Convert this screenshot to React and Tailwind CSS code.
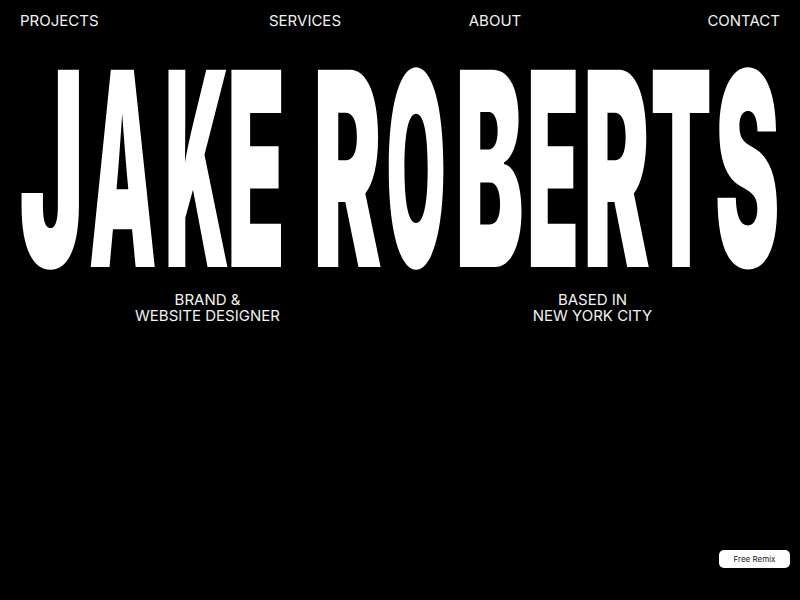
import React from "react";

const letters = [
  { c: "J", cls: "w-[60px] ml-[22px]", s: "scale-x-[0.4]" },
  { c: "A", cls: "w-[69px] ml-[6px]", s: "scale-x-[0.315]" },
  { c: "K", cls: "w-[67px] ml-[6px]", s: "scale-x-[0.315]" },
  { c: "E", cls: "w-[47px] ml-[3px]", s: "scale-x-[0.35]" },
  { c: "R", cls: "w-[68px] ml-[34px]", s: "scale-x-[0.38]" },
  { c: "O", cls: "w-[58px] ml-[5px]", s: "scale-x-[0.285]" },
  { c: "B", cls: "w-[64px] ml-[13px]", s: "scale-x-[0.38]" },
  { c: "E", cls: "w-[43px] ml-[10px]", s: "scale-x-[0.315]" },
  { c: "R", cls: "w-[63px] ml-[10px]", s: "scale-x-[0.37]" },
  { c: "T", cls: "w-[58px] ml-[4px]", s: "scale-x-[0.33]" },
  { c: "S", cls: "w-[60px] ml-[7px]", s: "scale-x-[0.36]" },
];

export default function App() {
  return (
    <div
      className="relative w-[800px] h-[600px] bg-black overflow-hidden text-white"
      style={{ fontFamily: "Inter, 'Liberation Sans', sans-serif" }}
    >
      <nav className="grid grid-cols-4 px-5 h-10 items-center text-[15px] leading-none text-[#f2f2f2]">
        <a className="justify-self-start">PROJECTS</a>
        <a className="justify-self-center">SERVICES</a>
        <a className="justify-self-center">ABOUT</a>
        <a className="justify-self-end">CONTACT</a>
      </nav>

      <h1 className="flex h-[250px] -mt-[7px] text-[271px] leading-none font-black text-white">
        {letters.map((l, i) => (
          <span key={i} className={`flex justify-center shrink-0 ${l.cls}`}>
            <span className={`inline-block origin-center ${l.s}`}>{l.c}</span>
          </span>
        ))}
      </h1>

      <div className="grid grid-cols-2 px-[15px] mt-[9px] text-[15px] leading-4 text-center text-[#f2f2f2]">
        <p>
          BRAND &amp;
          <br />
          WEBSITE DESIGNER
        </p>
        <p>
          BASED IN
          <br />
          NEW YORK CITY
        </p>
      </div>

      <button className="absolute right-[10px] bottom-[32px] w-[71px] h-[18px] rounded-[5px] bg-white text-[8px] text-[#222] flex items-center justify-center">
        Free Remix
      </button>
    </div>
  );
}
